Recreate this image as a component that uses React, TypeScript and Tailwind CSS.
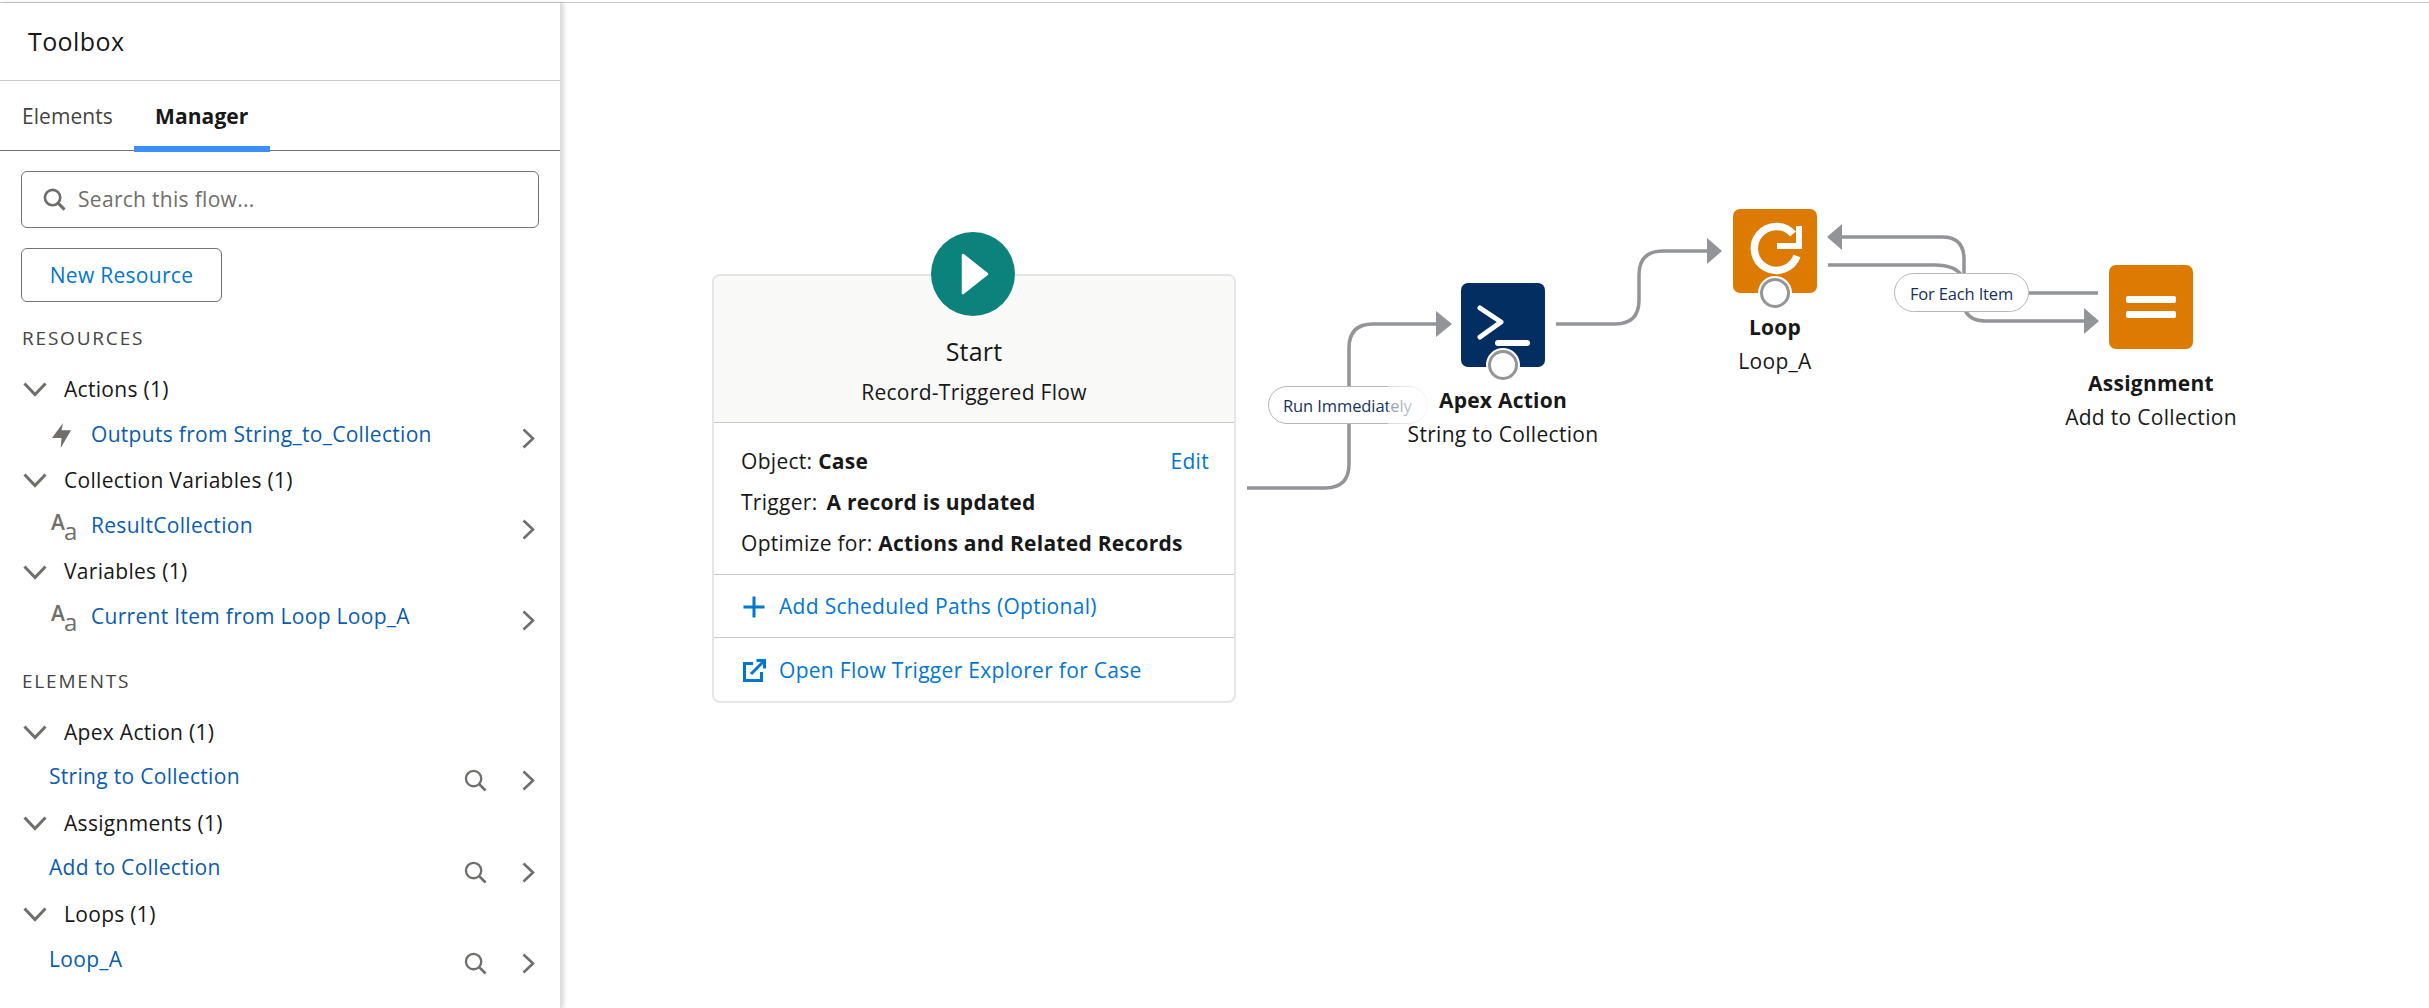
const FONT = "font-['Open_Sans','Noto_Sans',sans-serif]";

function ChevronDown() {
  return (
    <svg width="24" height="15" viewBox="0 0 24 15" className="shrink-0">
      <path d="M1.5 1.5 L12 12.5 L22.5 1.5" fill="none" stroke="#706e6b" strokeWidth="3" />
    </svg>
  );
}

function ChevronRight() {
  return (
    <svg width="13" height="21" viewBox="0 0 13 21" className="shrink-0 mt-[6px]">
      <path d="M1.5 1.5 L11 10.5 L1.5 19.5" fill="none" stroke="#706e6b" strokeWidth="2.6" />
    </svg>
  );
}

function SearchIcon({ className, weight }: { className: string; weight: number }) {
  return (
    <svg viewBox="0 0 24 24" fill="none" className={`shrink-0 ${className}`}>
      <circle cx="10" cy="10" r="8" stroke="#706e6b" strokeWidth={weight} />
      <path d="M15.8 15.8 L22.5 22.5" stroke="#706e6b" strokeWidth={weight + 0.4} />
    </svg>
  );
}

function Bolt() {
  return (
    <svg width="20" height="25" viewBox="0 0 20 25" className="shrink-0">
      <path d="M11 0 L0 15 L9.5 15 L8.7 25 L19 7.3 L9.5 7.3 Z" fill="#706e6b" />
    </svg>
  );
}

function TextType() {
  return (
    <span className="relative block w-[25px] h-[26px] shrink-0 -ml-[1px] text-[#706e6b]">
      <span className="absolute left-0 top-[-6px] text-[21px] leading-[28px] font-semibold">A</span>
      <span className="absolute left-[13px] top-[1px] text-[24px] leading-[32px]">a</span>
    </span>
  );
}

function GroupRow({ label }: { label: string }) {
  return (
    <div className="h-[45.6px] flex items-center pl-[23px]">
      <ChevronDown />
      <span className="ml-[17px] text-[21px] text-[#181818] tracking-[0.3px]">{label}</span>
    </div>
  );
}

function ResourceRow({ label, icon }: { label: string; icon: "bolt" | "text" }) {
  return (
    <div className="h-[45.6px] flex items-center pl-[52px] pr-[25px]">
      <span className="w-[39px] shrink-0">{icon === "bolt" ? <Bolt /> : <TextType />}</span>
      <span className="flex-1 text-[21px] text-[#0b5cab] tracking-[0.3px] -mt-[2px]">{label}</span>
      <ChevronRight />
    </div>
  );
}

function ElementRow({ label }: { label: string }) {
  return (
    <div className="h-[45.6px] flex items-center pl-[49px] pr-[25px]">
      <span className="flex-1 text-[21px] text-[#0b5cab] tracking-[0.3px] -mt-[2px]">{label}</span>
      <SearchIcon className="w-[23px] h-[23px] mt-[6px] mr-[35px]" weight={2.4} />
      <ChevronRight />
    </div>
  );
}

function Sidebar() {
  return (
    <aside className="w-[561px] shrink-0 border-r border-[#dddddd] shadow-[3px_0_4px_rgba(0,0,0,0.14)] z-10 bg-white">
      <div className="h-[78px] border-b border-[#c9c9c9] pl-[28px] flex items-center">
        <h1 className="text-[25px] text-[#181818] tracking-[0.4px] font-normal">Toolbox</h1>
      </div>
      <div className="h-[70px] border-b border-[#747474] flex pl-[22px] text-[21px]">
        <div className="flex items-center text-[#444444] tracking-[0.05px] pt-[2px]">Elements</div>
        <div className="ml-[21px] w-[136px] flex items-center justify-center font-bold text-[#181818] border-b-[6px] border-[#3b8ff5] -mb-[2px] tracking-[0.1px] pt-[6px]">
          Manager
        </div>
      </div>
      <div className="mx-[21px] mt-[20px] h-[57px] border border-[#747474] rounded-[6px] flex items-center pl-[21px]">
        <SearchIcon className="w-[23px] h-[23px]" weight={2.8} />
        <span className="ml-[12px] text-[21px] text-[#706e6b] tracking-[0.3px]">Search this flow...</span>
      </div>
      <div className="ml-[21px] mt-[20px] w-[201px] h-[54px] border border-[#747474] rounded-[6px] flex items-center justify-center pt-[2px] text-[21px] text-[#0176d3] tracking-[0.3px]">
        New Resource
      </div>

      <div className="mt-[21px] h-[30px] pl-[22px] flex items-center text-[19px] text-[#444444] tracking-[1.8px]">RESOURCES</div>
      <div className="mt-[14px]">
        <GroupRow label="Actions (1)" />
        <ResourceRow icon="bolt" label="Outputs from String_to_Collection" />
        <GroupRow label="Collection Variables (1)" />
        <ResourceRow icon="text" label="ResultCollection" />
        <GroupRow label="Variables (1)" />
        <ResourceRow icon="text" label="Current Item from Loop Loop_A" />
      </div>

      <div className="mt-[26px] h-[30px] pl-[22px] flex items-center text-[19px] text-[#444444] tracking-[1.8px]">ELEMENTS</div>
      <div className="mt-[13px]">
        <GroupRow label="Apex Action (1)" />
        <ElementRow label="String to Collection" />
        <GroupRow label="Assignments (1)" />
        <ElementRow label="Add to Collection" />
        <GroupRow label="Loops (1)" />
        <ElementRow label="Loop_A" />
      </div>
    </aside>
  );
}

function Connectors() {
  const line = "#939498";
  return (
    <svg className="absolute inset-0 w-full h-full" viewBox="561 3 1868 1005" fill="none">
      {/* Start to Apex */}
      <path d="M1247 488 H1325 Q1349 488 1349 464 V348 Q1349 324 1373 324 H1438" stroke={line} strokeWidth="3.5" />
      <path d="M1436 311 L1452 324 L1436 337 Z" fill={line} />
      {/* Apex to Loop */}
      <path d="M1556 324 H1615 Q1639 324 1639 300 V275 Q1639 251 1663 251 H1709" stroke={line} strokeWidth="3.5" />
      <path d="M1707 238 L1722 251 L1707 264 Z" fill={line} />
      {/* Loop back */}
      <path d="M1964 275 V259 Q1964 237 1942 237 H1840" stroke={line} strokeWidth="3.5" />
      <path d="M1842 224 L1827 237 L1842 250 Z" fill={line} />
      {/* For each */}
      <path d="M1828 265 H1935 Q1955 265 1962 276" stroke={line} strokeWidth="3.5" />
      <path d="M1965 310 Q1970 321 1985 321 H2086" stroke={line} strokeWidth="3.5" />
      <path d="M2084 308 L2099 321 L2084 334 Z" fill={line} />
      <path d="M2029 293 H2098" stroke={line} strokeWidth="3.5" />
    </svg>
  );
}

function Ring({ className }: { className: string }) {
  return (
    <div className={`absolute w-[34px] h-[34px] rounded-full bg-white flex items-center justify-center ${className}`}>
      <div className="w-[30px] h-[30px] rounded-full bg-white border-[3.5px] border-[#939498]" />
    </div>
  );
}

function NodeLabel({ title, sub, className }: { title: string; sub: string; className: string }) {
  return (
    <div className={`absolute -translate-x-1/2 w-[300px] text-center ${className}`}>
      <div className="h-[32px] leading-[32px] text-[21px] font-bold text-[#181818] tracking-[0.25px]">{title}</div>
      <div className="mt-[2px] h-[32px] leading-[32px] text-[21px] text-[#181818] tracking-[0.3px]">{sub}</div>
    </div>
  );
}

function StartCard() {
  return (
    <div className="absolute left-[151px] top-[271px] w-[524px] h-[429px] border-2 border-[#e5e5e5] rounded-[8px] bg-white flex flex-col">
      <div className="h-[147px] shrink-0 bg-[#f9f9f7] rounded-t-[6px] border-b border-[#c9c9c9] text-center text-[#181818]">
        <div className="pt-[60px] h-[90px] leading-[30px] text-[25px] tracking-[0.2px]">Start</div>
        <div className="mt-[11px] leading-[30px] text-[21px] tracking-[0.3px]">Record-Triggered Flow</div>
      </div>
      <div className="h-[152px] shrink-0 border-b border-[#c9c9c9] pt-[18px] pl-[27px] pr-[25px] text-[21px] text-[#181818] tracking-[0.3px]">
        <div className="h-[41px] flex items-center justify-between">
          <span>Object: <b className="tracking-[0.25px]">Case</b></span>
          <span className="text-[#0176d3]">Edit</span>
        </div>
        <div className="h-[41px] flex items-center">
          <span>Trigger:</span>
          <b className="ml-[9px] tracking-[0.25px]">A record is updated</b>
        </div>
        <div className="h-[41px] flex items-center">
          <span>Optimize for: <b className="tracking-[0.25px]">Actions and Related Records</b></span>
        </div>
      </div>
      <div className="h-[63px] shrink-0 border-b border-[#c9c9c9] pl-[29px] flex items-center text-[21px] text-[#0176d3] tracking-[0.3px]">
        <svg width="22" height="22" viewBox="0 0 22 22" className="shrink-0 mt-[2px]">
          <path d="M11 0.5 V21.5 M0.5 11 H21.5" stroke="#0176d3" strokeWidth="3" />
        </svg>
        <span className="ml-[14px] pt-[2px]">Add Scheduled Paths (Optional)</span>
      </div>
      <div className="flex-1 pl-[29px] flex items-center text-[21px] text-[#0176d3] tracking-[0.3px]">
        <svg width="23" height="23" viewBox="0 0 23 23" fill="none" className="shrink-0 mt-[2px]">
          <path d="M10 4.5 H1.5 V21.5 H18.5 V13" stroke="#0176d3" strokeWidth="3" />
          <path d="M8 15 L21 2 M13.5 1.5 H21.5 V9.5" stroke="#0176d3" strokeWidth="3" />
        </svg>
        <span className="ml-[13px] pt-[2px]">Open Flow Trigger Explorer for Case</span>
      </div>
    </div>
  );
}

function Canvas() {
  return (
    <main className="relative flex-1 bg-white overflow-hidden">
      <Connectors />
      <StartCard />

      {/* Start badge */}
      <div className="absolute left-[370px] top-[229px] w-[84px] h-[84px] rounded-full bg-[#0b827c] flex items-center justify-center">
        <svg width="28" height="42" viewBox="0 0 28 42" className="ml-[3px]">
          <path d="M2 2 L26 21 L2 40 Z" fill="#ffffff" stroke="#ffffff" strokeWidth="2.5" strokeLinejoin="round" />
        </svg>
      </div>

      {/* Run Immediately pill */}
      <div className="absolute left-[707px] top-[383px] w-[160px] h-[38px] rounded-full border border-[#b8b8bc] bg-white flex items-center pl-[14px] pt-[2px] text-[16.5px] text-[#16325c] tracking-[-0.1px]">
        Run Immediately
      </div>
      <div className="absolute left-[827px] top-[382px] w-[42px] h-[40px] bg-gradient-to-r from-white/50 to-white/90" />

      {/* Apex */}
      <div className="absolute left-[900px] top-[280px] w-[84px] h-[84px] rounded-[7px] bg-[#032e61]">
        <svg width="84" height="84" viewBox="0 0 84 84" fill="none">
          <path d="M19 25 L40 39 L19 54" stroke="#ffffff" strokeWidth="5" strokeLinecap="round" strokeLinejoin="round" />
          <path d="M37 60 H66" stroke="#ffffff" strokeWidth="6" strokeLinecap="round" />
        </svg>
      </div>
      <Ring className="left-[925px] top-[345px]" />
      <NodeLabel title="Apex Action" sub="String to Collection" className="left-[942px] top-[381px]" />

      {/* Loop */}
      <div className="absolute left-[1172px] top-[206px] w-[84px] h-[84px] rounded-[7px] bg-[#dd7a01]">
        <svg width="84" height="84" viewBox="0 0 84 84" fill="none">
          <path d="M60 25 A22 22 0 1 0 64 47" stroke="#ffffff" strokeWidth="7.5" />
          <path d="M66 17 V37 H44" stroke="#ffffff" strokeWidth="6" />
        </svg>
      </div>
      <Ring className="left-[1197px] top-[273px]" />
      <NodeLabel title="Loop" sub="Loop_A" className="left-[1214px] top-[308px]" />

      {/* For Each Item pill */}
      <div className="absolute left-[1333px] top-[270px] w-[135px] h-[39px] rounded-full border border-[#b8b8bc] bg-white flex items-center justify-center pt-[3px] text-[16.5px] text-[#16325c] tracking-[-0.15px]">
        For Each Item
      </div>

      {/* Assignment */}
      <div className="absolute left-[1548px] top-[262px] w-[84px] h-[84px] rounded-[7px] bg-[#dd7a01] flex flex-col items-center justify-center gap-[8px]">
        <div className="w-[50px] h-[7px] rounded-[2px] bg-white" />
        <div className="w-[50px] h-[7px] rounded-[2px] bg-white" />
      </div>
      <NodeLabel title="Assignment" sub="Add to Collection" className="left-[1590px] top-[364px]" />
    </main>
  );
}

export default function App() {
  return (
    <div className={`h-screen w-full overflow-hidden bg-white flex flex-col ${FONT}`}>
      <div className="h-[3px] shrink-0 border-b border-[#c9c9c9]" />
      <div className="flex-1 flex min-h-0">
        <Sidebar />
        <Canvas />
      </div>
    </div>
  );
}
